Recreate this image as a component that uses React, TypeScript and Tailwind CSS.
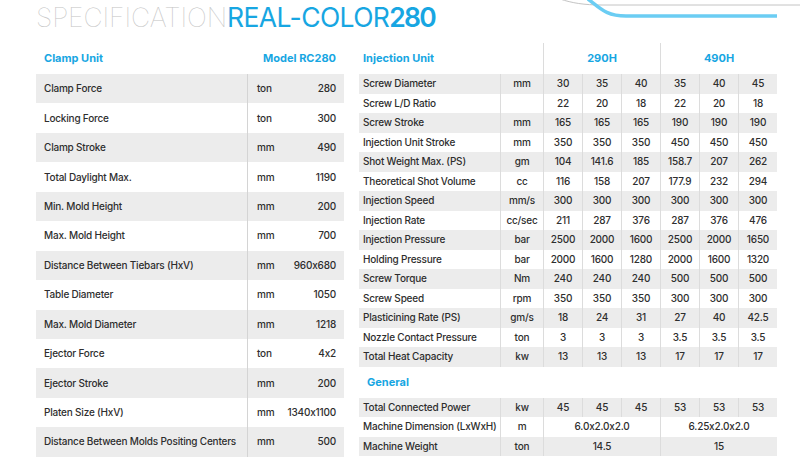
import React from "react";

const BLUE = "text-[#17a6e2]";

const leftRows: [string, string, string][] = [
  ["Clamp Force", "ton", "280"],
  ["Locking Force", "ton", "300"],
  ["Clamp Stroke", "mm", "490"],
  ["Total Daylight Max.", "mm", "1190"],
  ["Min. Mold Height", "mm", "200"],
  ["Max. Mold Height", "mm", "700"],
  ["Distance Between Tiebars (HxV)", "mm", "960x680"],
  ["Table Diameter", "mm", "1050"],
  ["Max. Mold Diameter", "mm", "1218"],
  ["Ejector Force", "ton", "4x2"],
  ["Ejector Stroke", "mm", "200"],
  ["Platen Size (HxV)", "mm", "1340x1100"],
  ["Distance Between Molds Positing Centers", "mm", "500"],
];

const injRows: [string, string, string[]][] = [
  ["Screw Diameter", "mm", ["30", "35", "40", "35", "40", "45"]],
  ["Screw L/D Ratio", "", ["22", "20", "18", "22", "20", "18"]],
  ["Screw Stroke", "mm", ["165", "165", "165", "190", "190", "190"]],
  ["Injection Unit Stroke", "mm", ["350", "350", "350", "450", "450", "450"]],
  ["Shot Weight Max. (PS)", "gm", ["104", "141.6", "185", "158.7", "207", "262"]],
  ["Theoretical Shot Volume", "cc", ["116", "158", "207", "177.9", "232", "294"]],
  ["Injection Speed", "mm/s", ["300", "300", "300", "300", "300", "300"]],
  ["Injection Rate", "cc/sec", ["211", "287", "376", "287", "376", "476"]],
  ["Injection Pressure", "bar", ["2500", "2000", "1600", "2500", "2000", "1650"]],
  ["Holding Pressure", "bar", ["2000", "1600", "1280", "2000", "1600", "1320"]],
  ["Screw Torque", "Nm", ["240", "240", "240", "500", "500", "500"]],
  ["Screw Speed", "rpm", ["350", "350", "350", "300", "300", "300"]],
  ["Plasticining Rate (PS)", "gm/s", ["18", "24", "31", "27", "40", "42.5"]],
  ["Nozzle Contact Pressure", "ton", ["3", "3", "3", "3.5", "3.5", "3.5"]],
  ["Total Heat Capacity", "kw", ["13", "13", "13", "17", "17", "17"]],
];

const GRID = "grid grid-cols-[141px_43px_repeat(6,39px)]";
const CELL = "border-l border-[#dcdcdc] flex items-center justify-center";

function InjRow({ label, unit, vals, shaded }: { label: string; unit: string; vals: string[]; shaded: boolean }) {
  return (
    <div className={`${GRID} h-[19.5px] ${shaded ? "bg-[#ececec]" : "bg-white"}`}>
      <div className="flex items-center pl-[4px] whitespace-nowrap">{label}</div>
      <div className={CELL}>{unit}</div>
      {vals.map((v, i) => (
        <div key={i} className={CELL}>
          {v}
        </div>
      ))}
    </div>
  );
}

function SpanRow({ label, unit, a, b, shaded }: { label: string; unit: string; a: string; b: string; shaded: boolean }) {
  return (
    <div className={`${GRID} h-[19.6px] ${shaded ? "bg-[#ececec]" : "bg-white"}`}>
      <div className="flex items-center pl-[4px] whitespace-nowrap">{label}</div>
      <div className={CELL}>{unit}</div>
      <div className={`${CELL} col-span-3`}>{a}</div>
      <div className={`${CELL} col-span-3`}>{b}</div>
    </div>
  );
}

export default function App() {
  return (
    <div
      className="relative w-[800px] h-[476px] bg-white overflow-hidden text-[#2e2e2e] text-[10px] font-medium tracking-[-0.2px] [font-feature-settings:'calt'_0]"
      style={{ fontFamily: "Inter, 'Liberation Sans', sans-serif" }}
    >
      <svg className="absolute top-0 left-[540px]" width="260" height="24" viewBox="540 0 260 24">
        <path d="M560 -1 C 572 3, 584 5, 602 5 L 800 5" fill="none" stroke="#c4c4c4" strokeWidth="1" />
        <path d="M588 -1 C 600 8, 606 16, 626 16 L 777 16" fill="none" stroke="#6bcdf3" strokeWidth="3.5" />
      </svg>

      <div className="h-[43px] pl-[36px] pt-[3.5px] flex items-start">
        <div className="flex items-baseline text-[26.5px] leading-none">
          <span className="font-thin text-[#c4c4c4] tracking-[-0.1px]">SPECIFICATION</span>
          <span className={`font-normal tracking-[-0.6px] ${BLUE}`}>REAL-COLOR</span>
          <span className={`font-semibold tracking-[-1.8px] ${BLUE}`}>280</span>
        </div>
      </div>

      <div className="flex pl-[36px] gap-[15px]">
        {/* Left table */}
        <div className="w-[308px] flex flex-col">
          <div className={`h-[31px] flex items-center justify-between px-[8px] text-[11px] font-bold tracking-[0px] ${BLUE}`}>
            <span>Clamp Unit</span>
            <span>Model RC280</span>
          </div>
          {leftRows.map(([l, u, v], i) => (
            <div key={l} className={`flex h-[29.45px] ${i % 2 === 0 ? "bg-[#ececec]" : "bg-white"}`}>
              <div className="w-[211px] flex items-center pl-[8px] whitespace-nowrap">{l}</div>
              <div className="flex-1 border-l border-[#d4d4d4] flex items-center justify-between pl-[9px] pr-[8px]">
                <span>{u}</span>
                <span>{v}</span>
              </div>
            </div>
          ))}
        </div>

        {/* Right table */}
        <div className="w-[418px] flex flex-col">
          <div className={`${GRID} h-[31px] text-[11px] font-bold tracking-[0px] ${BLUE}`}>
            <div className="col-span-2 flex items-center pl-[4px]">Injection Unit</div>
            <div className="col-span-3 border-l border-[#dcdcdc] flex items-center justify-center">290H</div>
            <div className="col-span-3 border-l border-[#dcdcdc] flex items-center justify-center">490H</div>
          </div>
          {injRows.map(([l, u, v], i) => (
            <InjRow key={l} label={l} unit={u} vals={v} shaded={i % 2 === 0} />
          ))}
          <div className={`h-[31px] flex items-center pl-[8px] text-[11px] font-bold tracking-[0px] ${BLUE}`}>General</div>
          <InjRow label="Total Connected Power" unit="kw" vals={["45", "45", "45", "53", "53", "53"]} shaded />
          <SpanRow label="Machine Dimension (LxWxH)" unit="m" a="6.0x2.0x2.0" b="6.25x2.0x2.0" shaded={false} />
          <SpanRow label="Machine Weight" unit="ton" a="14.5" b="15" shaded />
        </div>
      </div>
    </div>
  );
}
